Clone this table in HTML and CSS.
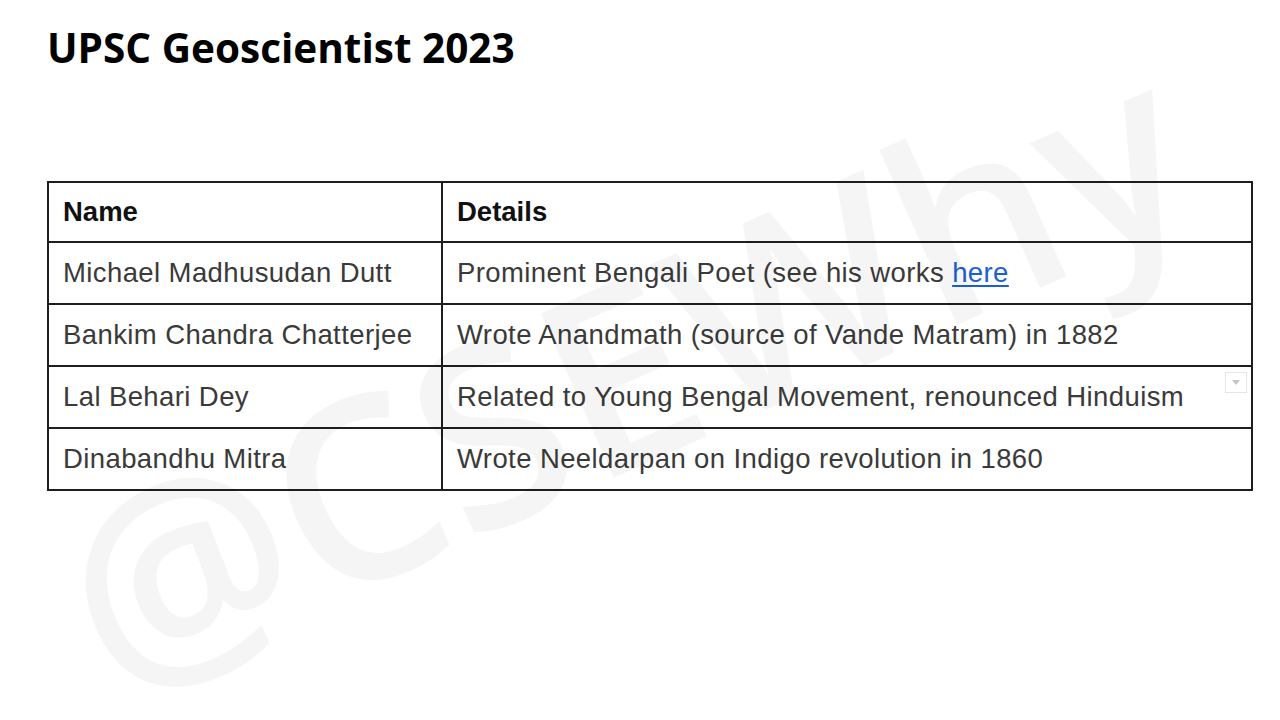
FILE: index.html
```html
<!DOCTYPE html>
<html lang="en">
<head>
<meta charset="utf-8">
<title>UPSC Geoscientist 2023</title>
<link rel="stylesheet" href="styles.css">
</head>
<body>
<main class="page">
  <h1 class="title">UPSC Geoscientist 2023</h1>
  <table class="grid">
    <thead>
      <tr><th class="col-name">Name</th><th>Details</th></tr>
    </thead>
    <tbody>
      <tr><td>Michael Madhusudan Dutt</td><td>Prominent Bengali Poet (see his works <a class="link" href="#">here</a></td></tr>
      <tr><td>Bankim Chandra Chatterjee</td><td>Wrote Anandmath (source of Vande Matram) in 1882</td></tr>
      <tr><td>Lal Behari Dey</td><td class="has-menu">Related to Young Bengal Movement, renounced Hinduism<span class="drop"><svg width="8" height="5" viewBox="0 0 8 5"><path d="M0 0h8L4 5z" fill="#c4c4c4"/></svg></span></td></tr>
      <tr><td>Dinabandhu Mitra</td><td>Wrote Neeldarpan on Indigo revolution in 1860</td></tr>
    </tbody>
  </table>
  <div class="watermark" aria-hidden="true">@CSEWhy</div>
</main>
</body>
</html>
```
FILE: styles.css
```css
html, body {
  margin: 0;
  padding: 0;
  background: #ffffff;
}
.page {
  position: relative;
  width: 1280px;
  height: 720px;
  overflow: hidden;
  box-sizing: border-box;
  padding: 20px 27px 0 47px;
}
.title {
  margin: 0;
  font-family: "Open Sans", "Liberation Sans", sans-serif;
  font-weight: 700;
  font-size: 40.5px;
  line-height: 56px;
  color: #000;
  letter-spacing: 0;
}
.grid {
  margin-top: 105px;
  width: 1206px;
  border-collapse: collapse;
  font-family: "Liberation Sans", Arial, sans-serif;
  font-size: 27.5px;
  color: #3a3a3a;
}
.grid th, .grid td {
  border: 2px solid #1e1e1e;
  padding: 0 14px;
  text-align: left;
  vertical-align: middle;
  box-sizing: border-box;
}
.grid th {
  height: 60px;
  font-weight: 700;
  color: #111;
}
.grid td {
  height: 62px;
  letter-spacing: 0.4px;
}
.col-name {
  width: 394px;
}
.link {
  color: #1a5ed8;
  text-decoration: underline;
  text-decoration-thickness: 1.5px;
  text-underline-offset: 3px;
}
.has-menu {
  position: relative;
}
.drop {
  position: absolute;
  right: 4px;
  top: 5px;
  width: 22px;
  height: 21px;
  box-sizing: border-box;
  border: 1px solid #e6e6e6;
  display: flex;
  align-items: center;
  justify-content: center;
}
.watermark {
  position: absolute;
  left: 125px;
  top: 475px;
  font-family: "Open Sans", "Liberation Sans", sans-serif;
  font-weight: 600;
  font-size: 252px;
  line-height: 1;
  color: rgba(0, 0, 0, 0.04);
  transform: rotate(-24deg);
  transform-origin: 0 100%;
  white-space: nowrap;
  pointer-events: none;
}
```
